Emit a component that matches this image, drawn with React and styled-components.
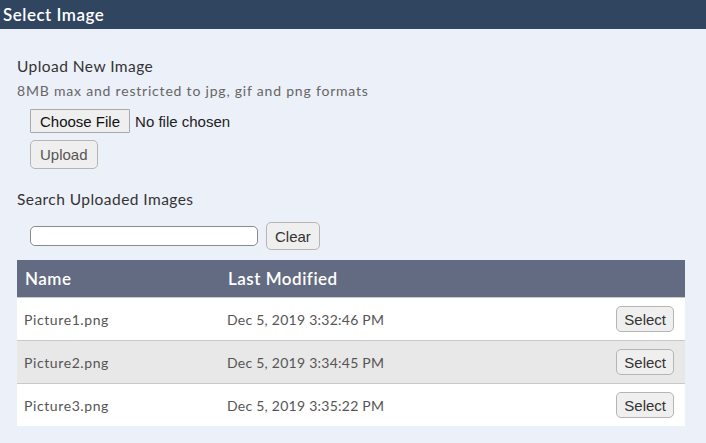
import React from "react";
import styled, { createGlobalStyle } from "styled-components";

const Global = createGlobalStyle`
  html, body { margin: 0; padding: 0; background: #ecf0f8; }
  body { font-family: Lato, "Open Sans", sans-serif; }
  * { box-sizing: border-box; }
`;

const Page = styled.div`
  width: 706px;
  height: 443px;
  background: #ecf0f8;
  overflow: hidden;
`;

const TitleBar = styled.div`
  height: 29px;
  background: #2f4560;
  color: #fff;
  font-size: 17px;
  font-weight: 600;
  letter-spacing: 0.5px;
  padding-left: 3px;
  display: flex;
  align-items: center;
`;

const Body = styled.div`
  padding: 27px 21px 0 17px;
`;

const SectionTitle = styled.div`
  font-size: 15.5px;
  color: #333;
  line-height: 20px;
  letter-spacing: 0.45px;
  margin-top: ${(p) => p.$mt || 0}px;
`;

const Hint = styled.div`
  font-size: 14px;
  color: #666;
  line-height: 20px;
  letter-spacing: 0.8px;
  margin-top: 5px;
`;

const Indented = styled.div`
  padding-left: 13px;
  display: flex;
  flex-direction: column;
  align-items: flex-start;
  gap: 7px;
  margin-top: ${(p) => p.$mt || 0}px;
`;

const FileRow = styled.label`
  display: flex;
  align-items: center;
  gap: 5px;
  font-family: "Liberation Sans", Arial, sans-serif;
  font-size: 15px;
  color: #222;
  input { display: none; }
`;

const FileButton = styled.span`
  display: inline-flex;
  align-items: center;
  height: 24px;
  padding: 0 9px;
  background: #efefef;
  border: 1px solid #a9a9a9;
  border-radius: 1px;
  color: #111;
`;

const Button = styled.button`
  font-family: "Liberation Sans", Arial, sans-serif;
  font-size: 15px;
  color: ${(p) => (p.$muted ? "#555" : "#333")};
  background: #efefef;
  border: 1px solid #b5b5b5;
  border-radius: 5px;
  height: ${(p) => p.$h || 26}px;
  padding: 0 ${(p) => p.$px || 7}px;
  display: inline-flex;
  align-items: center;
  justify-content: center;
  cursor: pointer;
`;

const SearchRow = styled.div`
  display: flex;
  align-items: center;
  gap: 8px;
  padding-left: 13px;
  margin-top: 13px;
`;

const SearchInput = styled.input`
  width: 228px;
  height: 20px;
  border: 1px solid #8a8a8a;
  border-radius: 5px;
  background: #fff;
  padding: 0 4px;
  font-size: 14px;
`;

const Table = styled.div`
  margin-top: 10px;
  width: 668px;
`;

const HeadRow = styled.div`
  display: grid;
  grid-template-columns: 203px 1fr auto;
  align-items: center;
  height: 37px;
  background: #636b82;
  color: #fff;
  font-size: 17px;
  font-weight: 600;
  letter-spacing: 0.5px;
  padding-left: 8px;
`;

const Row = styled.div`
  display: grid;
  grid-template-columns: 203px 1fr auto;
  align-items: center;
  height: 43px;
  border-top: 1px solid #c9c9c9;
  background: ${(p) => (p.$alt ? "#e8e8e8" : "#fff")};
  color: #555;
  font-size: 14px;
  padding: 0 11px 0 7px;
`;

const Cell = styled.span`
  letter-spacing: ${(p) => p.$ls || 0}px;
`;

const rows = [
  ["Picture1.png", "Dec 5, 2019 3:32:46 PM"],
  ["Picture2.png", "Dec 5, 2019 3:34:45 PM"],
  ["Picture3.png", "Dec 5, 2019 3:35:22 PM"],
];

export default function App() {
  return (
    <Page>
      <Global />
      <TitleBar>Select Image</TitleBar>
      <Body>
        <SectionTitle>Upload New Image</SectionTitle>
        <Hint>8MB max and restricted to jpg, gif and png formats</Hint>
        <Indented $mt={8}>
          <FileRow>
            <input type="file" />
            <FileButton>Choose File</FileButton>
            <span>No file chosen</span>
          </FileRow>
          <Button $h={29} $px={9} $muted>Upload</Button>
        </Indented>
        <SectionTitle $mt={20}>Search Uploaded Images</SectionTitle>
        <SearchRow>
          <SearchInput type="text" />
          <Button $h={28} $px={8}>Clear</Button>
        </SearchRow>
        <Table>
          <HeadRow>
            <span>Name</span>
            <span>Last Modified</span>
            <span />
          </HeadRow>
          {rows.map(([n, d], i) => (
            <Row key={n} $alt={i === 1}>
              <Cell $ls={0.6}>{n}</Cell>
              <Cell $ls={0.25}>{d}</Cell>
              <Button>Select</Button>
            </Row>
          ))}
        </Table>
      </Body>
    </Page>
  );
}
